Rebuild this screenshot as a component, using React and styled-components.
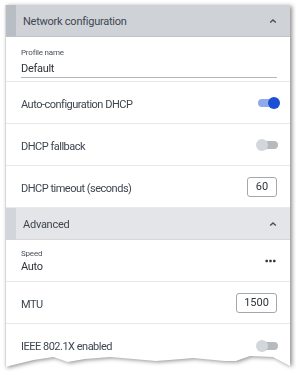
import styled, { createGlobalStyle } from "styled-components";

const GlobalStyle = createGlobalStyle`
  html, body {
    margin: 0;
    padding: 0;
    background: #ffffff;
    font-family: Roboto, "Liberation Sans", sans-serif;
  }
`;

export default function App() {
  return (
    <>
      <GlobalStyle />
      <Page>
        <Shadow>
          <Card>
            <Header $tone="dark">
              <HeaderTitle>Network configuration</HeaderTitle>
              <Chevron />
            </Header>
            <FieldRow>
              <SmallLabel>Profile name</SmallLabel>
              <TextValue>Default</TextValue>
            </FieldRow>
            <Row>
              <Label>Auto-configuration DHCP</Label>
              <Toggle $on />
            </Row>
            <Row>
              <Label>DHCP fallback</Label>
              <Toggle />
            </Row>
            <Row>
              <Label>DHCP timeout (seconds)</Label>
              <NumberBox $width={30}>60</NumberBox>
            </Row>
            <Header $tone="light">
              <HeaderTitle>Advanced</HeaderTitle>
              <Chevron />
            </Header>
            <SelectRow>
              <div>
                <SmallLabel>Speed</SmallLabel>
                <SelectValue>Auto</SelectValue>
              </div>
              <Ellipsis />
            </SelectRow>
            <Row>
              <Label>MTU</Label>
              <NumberBox $width={41}>1500</NumberBox>
            </Row>
            <Row $last>
              <Label>IEEE 802.1X enabled</Label>
              <Toggle />
            </Row>
          </Card>
        </Shadow>
      </Page>
    </>
  );
}

function Chevron() {
  return (
    <svg width="8" height="6" viewBox="0 0 8 6">
      <polyline
        points="1.2,4.6 4,2 6.8,4.6"
        fill="none"
        stroke="#4a5058"
        strokeWidth="1.4"
      />
    </svg>
  );
}

function Ellipsis() {
  return (
    <svg width="11" height="4" viewBox="0 0 11 4" style={{ marginRight: 1 }}>
      <rect x="0.5" y="0.8" width="2.4" height="2.4" rx="0.6" fill="#2f343a" />
      <rect x="4.3" y="0.8" width="2.4" height="2.4" rx="0.6" fill="#2f343a" />
      <rect x="8.1" y="0.8" width="2.4" height="2.4" rx="0.6" fill="#2f343a" />
    </svg>
  );
}

const Page = styled.div`
  width: 300px;
  height: 375px;
  padding: 5px 0 0 5px;
  box-sizing: border-box;
  overflow: hidden;
`;

const Shadow = styled.div`
  width: 285px;
  filter: drop-shadow(2px 1px 2px rgba(0, 0, 0, 0.45));
`;

const Card = styled.div`
  background: #ffffff;
  border-left: 1px solid #d6d9dc;
  height: 368px;
  display: flex;
  flex-direction: column;
  clip-path: polygon(
    0 0,
    100% 0,
    100% 361px,
    94% 352px,
    86% 351px,
    81% 356px,
    77% 356px,
    66% 353px,
    62% 354px,
    53% 356px,
    45% 354px,
    37% 352px,
    28% 354px,
    22% 357px,
    17% 352px,
    10% 355px,
    0 362px
  );
`;

const Header = styled.div`
  height: 32px;
  flex-shrink: 0;
  display: flex;
  align-items: center;
  justify-content: space-between;
  padding: 1px 13px 0 7px;
  background: ${(p) => (p.$tone === "dark" ? "#cfd3d8" : "#e3e5e8")};
  border-left: 10px solid ${(p) => (p.$tone === "dark" ? "#b9bec4" : "#d2d5d9")};
  border-bottom: 1px solid ${(p) => (p.$tone === "dark" ? "#bfc4ca" : "#d4d7db")};
  box-sizing: border-box;
`;

const HeaderTitle = styled.span`
  font-size: 11px;
  letter-spacing: -0.25px;
  color: #3e4650;
`;

const FieldRow = styled.div`
  height: 45px;
  flex-shrink: 0;
  padding: 11px 13px 0 15px;
  box-sizing: border-box;
  border-bottom: 1px solid #e6e8ea;
  display: flex;
  flex-direction: column;
`;

const SmallLabel = styled.div`
  font-size: 8px;
  letter-spacing: -0.2px;
  color: #4a5058;
  line-height: 10px;
`;

const TextValue = styled.div`
  font-size: 11px;
  letter-spacing: -0.3px;
  color: #2f343a;
  line-height: 13px;
  margin-top: 4px;
  padding-bottom: 2px;
  border-bottom: 1px solid #b4b8bd;
`;

const SelectValue = styled.div`
  font-size: 11px;
  letter-spacing: -0.3px;
  color: #2f343a;
  line-height: 13px;
  margin-top: 1px;
`;

const Row = styled.div`
  height: 42px;
  flex-shrink: 0;
  display: flex;
  align-items: center;
  justify-content: space-between;
  padding: 3px 13px 0 15px;
  box-sizing: border-box;
  border-bottom: ${(p) => (p.$last ? "none" : "1px solid #e6e8ea")};
`;

const SelectRow = styled(Row)`
  padding-top: 1px;
`;

const Label = styled.span`
  font-size: 11px;
  letter-spacing: -0.5px;
  color: #3e4650;
`;

const Toggle = styled.span`
  position: relative;
  width: 20px;
  height: 8px;
  border-radius: 4px;
  margin-right: -1px;
  margin-top: -2px;
  background: ${(p) => (p.$on ? "#8fa9ec" : "#b6babf")};
  &::after {
    content: "";
    position: absolute;
    top: -2px;
    left: ${(p) => (p.$on ? "10px" : "-2px")};
    width: 12px;
    height: 12px;
    border-radius: 50%;
    background: ${(p) => (p.$on ? "#1a4fd6" : "#d3d6da")};
  }
`;

const NumberBox = styled.span`
  width: ${(p) => p.$width}px;
  height: 20px;
  margin-top: -3px;
  border: 1px solid #a3a8ae;
  border-radius: 3px;
  box-sizing: border-box;
  display: flex;
  align-items: center;
  justify-content: center;
  font-size: 11px;
  color: #2f343a;
`;
